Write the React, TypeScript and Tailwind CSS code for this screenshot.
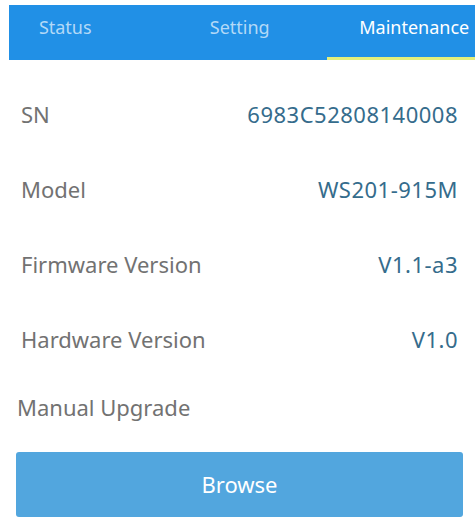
const tabs = [
  { name: 'Status', active: false },
  { name: 'Setting', active: false },
  { name: 'Maintenance', active: true },
];

const rows = [
  { label: 'SN', value: '6983C52808140008' },
  { label: 'Model', value: 'WS201-915M' },
  { label: 'Firmware Version', value: 'V1.1-a3' },
  { label: 'Hardware Version', value: 'V1.0' },
];

export default function App() {
  return (
    <div
      className="w-[475px] h-[532px] bg-white overflow-hidden pt-[5px]"
      style={{ fontFamily: '"Noto Sans", "Open Sans", Arial, sans-serif' }}
    >
      {/* Tab bar */}
      <div className="ml-[9px] h-[55px] bg-[#2190e6] overflow-hidden">
        <div className="flex h-full -ml-[31px]">
          {tabs.map((tab) => (
            <div
              key={tab.name}
              className={`w-[174.5px] shrink-0 flex items-center justify-center relative text-[18px] ${
                tab.active ? 'text-white' : 'text-[#b3d9f7]'
              }`}
            >
              <span className="-mt-[10px]">{tab.name}</span>
              {tab.active && (
                <div className="absolute left-0 right-0 bottom-0 h-[3px] bg-[#e4ef7c]" />
              )}
            </div>
          ))}
        </div>
      </div>

      {/* Info rows */}
      <div className="pt-[17px] pl-[21px] pr-[17px]">
        {rows.map((row) => (
          <div key={row.label} className="h-[75px] flex items-center justify-between text-[22px]">
            <span className="text-[#727272]">{row.label}</span>
            <span className="text-[#356c8c] tracking-[0.5px]">{row.value}</span>
          </div>
        ))}
      </div>

      {/* Manual upgrade */}
      <div className="pl-[17px] h-[60px] flex items-center text-[22px] text-[#727272]">
        Manual Upgrade
      </div>
      <div className="pl-[16px] pr-[12px] mt-[15px]">
        <button className="w-full h-[65px] rounded-[3px] bg-[#52a6de] text-white text-[22px] flex items-center justify-center">
          Browse
        </button>
      </div>
    </div>
  );
}
